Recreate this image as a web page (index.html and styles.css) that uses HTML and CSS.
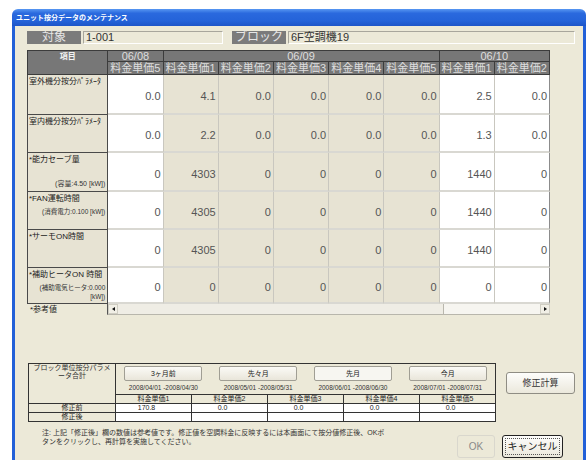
FILE: index.html
```html
<!DOCTYPE html>
<html lang="ja">
<head>
    <meta charset="UTF-8">
    <title>ユニット按分データのメンテナンス</title>
    <link rel="stylesheet" href="styles.css">
</head>
<body>
    <div class="window">
        <div class="titlebar">ユニット按分データのメンテナンス</div>
        <div class="client">
            <div class="target-row">
                <div class="tag">対象</div>
                <div class="field field-unit">1-001</div>
                <div class="tag tag-block">ブロック</div>
                <div class="field field-block">6F空調機19</div>
            </div>

            <table class="grid">
                <colgroup>
                    <col class="c-label">
                    <col class="c-w"><col class="c-b"><col class="c-b"><col class="c-b"><col class="c-b"><col class="c-b"><col class="c-w"><col class="c-w">
                </colgroup>
                <thead>
                    <tr class="h1">
                        <th rowspan="2" class="item">項目</th>
                        <th>06/08</th>
                        <th colspan="5">06/09</th>
                        <th colspan="2" class="last">06/10</th>
                    </tr>
                    <tr class="h2">
                        <th>料金単価5</th>
                        <th>料金単価1</th>
                        <th>料金単価2</th>
                        <th>料金単価3</th>
                        <th>料金単価4</th>
                        <th>料金単価5</th>
                        <th>料金単価1</th>
                        <th class="last">料金単価2</th>
                    </tr>
                </thead>
                <tbody>
                    <tr>
                        <td class="lbl"><div class="lbl-title">室外機分按分ﾊﾟﾗﾒｰﾀ</div></td>
                        <td>0.0</td><td>4.1</td><td>0.0</td><td>0.0</td><td>0.0</td><td>0.0</td><td>2.5</td><td class="last">0.0</td>
                    </tr>
                    <tr>
                        <td class="lbl"><div class="lbl-title">室内機分按分ﾊﾟﾗﾒｰﾀ</div></td>
                        <td>0.0</td><td>2.2</td><td>0.0</td><td>0.0</td><td>0.0</td><td>0.0</td><td>1.3</td><td class="last">0.0</td>
                    </tr>
                    <tr>
                        <td class="lbl">
                            <div class="lbl-title">*能力セーブ量</div>
                            <div class="lbl-sub sub-bottom">(容量:4.50 [kW])</div>
                        </td>
                        <td>0</td><td>4303</td><td>0</td><td>0</td><td>0</td><td>0</td><td>1440</td><td class="last">0</td>
                    </tr>
                    <tr>
                        <td class="lbl">
                            <div class="lbl-title">*FAN運転時間</div>
                            <div class="lbl-sub">(消費電力:0.100 [kW])</div>
                        </td>
                        <td>0</td><td>4305</td><td>0</td><td>0</td><td>0</td><td>0</td><td>1440</td><td class="last">0</td>
                    </tr>
                    <tr>
                        <td class="lbl"><div class="lbl-title">*サーモON時間</div></td>
                        <td>0</td><td>4305</td><td>0</td><td>0</td><td>0</td><td>0</td><td>1440</td><td class="last">0</td>
                    </tr>
                    <tr>
                        <td class="lbl">
                            <div class="lbl-title">*補助ヒータON 時間</div>
                            <div class="lbl-sub">(補助電気ヒータ:0.000<br>[kW])</div>
                        </td>
                        <td>0</td><td>0</td><td>0</td><td>0</td><td>0</td><td>0</td><td>0</td><td class="last">0</td>
                    </tr>
                </tbody>
            </table>
            <div class="grid-foot">
                <div class="ref">*参考値</div>
                <div class="hscroll">
                    <div class="arrow arrow-left"></div>
                    <div class="thumb"></div>
                    <div class="track"></div>
                    <div class="arrow arrow-right"></div>
                </div>
            </div>

            <div class="summary">
                <table class="sum">
                    <colgroup>
                        <col class="s-label"><col class="s-col"><col class="s-col"><col class="s-col"><col class="s-col"><col class="s-col">
                    </colgroup>
                    <tr class="s-top">
                        <td rowspan="2" class="s-head">ブロック単位按分パラメ<br>ータ合計</td>
                        <td colspan="5" class="months">
                            <div class="month-list">
                                <div class="month">
                                    <div class="mbtn">3ヶ月前</div>
                                    <div class="mdate">2008/04/01 -2008/04/30</div>
                                </div>
                                <div class="month">
                                    <div class="mbtn">先々月</div>
                                    <div class="mdate">2008/05/01 -2008/05/31</div>
                                </div>
                                <div class="month">
                                    <div class="mbtn mbtn-on">先月</div>
                                    <div class="mdate">2008/06/01 -2008/06/30</div>
                                </div>
                                <div class="month">
                                    <div class="mbtn">今月</div>
                                    <div class="mdate">2008/07/01 -2008/07/31</div>
                                </div>
                            </div>
                        </td>
                    </tr>
                    <tr class="s-cols">
                        <td>料金単価1</td><td>料金単価2</td><td>料金単価3</td><td>料金単価4</td><td>料金単価5</td>
                    </tr>
                    <tr class="s-val">
                        <td class="s-name">修正前</td>
                        <td>170.8</td><td>0.0</td><td>0.0</td><td>0.0</td><td>0.0</td>
                    </tr>
                    <tr class="s-val">
                        <td class="s-name">修正後</td>
                        <td></td><td></td><td></td><td></td><td></td>
                    </tr>
                </table>
                <div class="btn btn-calc">修正計算</div>
            </div>

            <div class="note-row">
                <p class="note">注: 上記「修正後」欄の数値は参考値です。修正値を空調料金に反映するには本画面にて按分値修正後、OKボ<br>タンをクリックし、再計算を実施してください。</p>
                <div class="actions">
                    <div class="btn btn-ok">OK</div>
                    <div class="btn btn-cancel"><span>キャンセル</span></div>
                </div>
            </div>
        </div>
    </div>
</body>
</html>
```

FILE: styles.css
```css
*{
    margin: 0;
    padding: 0;
    box-sizing: border-box;
}
body{
    background: #fff;
    font-family: "Liberation Sans", "Noto Sans CJK JP", sans-serif;
    color: #222;
    overflow: hidden;
}
.window{
    margin: 9px 0 0 12px;
    width: 574px;
}
.titlebar{
    height: 17px;
    padding-left: 4px;
    border-radius: 6px 6px 0 0;
    background: linear-gradient(#5797f2, #2a69de 25%, #2463d9 70%, #1d55c8);
    color: #fff;
    font-size: 7px;
    font-weight: bold;
    line-height: 17px;
}
.client{
    height: 434px;
    padding: 5px 8px 0 12px;
    background: #ece9d8;
    border-left: 3px solid #2260d8;
    border-right: 3px solid #2260d8;
}

/* 対象 / ブロック */
.target-row{
    display: flex;
    height: 13px;
}
.tag{
    width: 54px;
    background: #7b7b7b;
    color: #e6e6e6;
    font-size: 12px;
    line-height: 13px;
    text-align: center;
}
.tag-block{
    margin-left: 9px;
}
.field{
    margin-left: 2px;
    padding-left: 2px;
    border: 1px solid;
    border-color: #a8a69c #fff #fff #a8a69c;
    font-size: 11px;
    line-height: 11px;
    color: #333;
}
.field-unit{
    width: 140px;
}
.field-block{
    flex: 1;
}

/* main grid */
.grid{
    margin-top: 6px;
    width: 523px;
    table-layout: fixed;
    border-collapse: separate;
    border-spacing: 0;
}
.c-label{ width: 81px; }
.c-w{ width: 55px; background: #fff; }
.c-b{ width: 55px; background: #e7e3d3; }
.grid th{
    padding: 0;
    background: #777;
    color: #dedede;
    font-weight: normal;
    font-size: 11px;
    border-right: 1px solid #3c3c3c;
    border-bottom: 1px solid #3c3c3c;
    overflow: hidden;
    white-space: nowrap;
}
.grid .h1 th{
    border-top: 1px solid #3c3c3c;
    height: 12px;
    line-height: 10px;
}
.grid .h2 th{
    height: 13px;
    line-height: 12px;
}
.grid th.item{
    border-left: 1px solid #3c3c3c;
    vertical-align: top;
    font-size: 8px;
    font-weight: bold;
    color: #f2f2f2;
    line-height: 11px;
}
.grid td{
    padding: 4px 2px 0 0;
    border-right: 1px solid #c9c7bf;
    border-bottom: 2px solid #d9d8d2;
    text-align: right;
    font-size: 11px;
    color: #555;
}
.grid td.last{
    border-right: 1px solid #8c8c8c;
}
.grid tbody tr:nth-child(1){ height: 40px; }
.grid tbody tr:nth-child(2){ height: 38px; }
.grid tbody tr:nth-child(3){ height: 39px; }
.grid tbody tr:nth-child(4){ height: 38px; }
.grid tbody tr:nth-child(5){ height: 38px; }
.grid tbody tr:nth-child(6){ height: 36px; }
.grid td.lbl{
    padding: 2px 2px 0 1px;
    background: #e7e3d3;
    border-left: 1px solid #4a4a4a;
    border-right: 1px solid #4a4a4a;
    border-bottom: 1px solid #4a4a4a;
    vertical-align: top;
    text-align: left;
    color: #222;
    font-size: 8px;
    line-height: 10px;
    white-space: nowrap;
}
.lbl-sub{
    margin-top: 3px;
    text-align: right;
    color: #333;
    font-size: 6.5px;
    line-height: 9px;
}
.sub-bottom{
    margin-top: 14px;
    font-size: 7px;
}
.grid-foot{
    display: flex;
    width: 523px;
    height: 11px;
}
.ref{
    width: 80px;
    padding: 1px 0 0 3px;
    font-size: 8px;
    line-height: 10px;
}
.hscroll{
    flex: 1;
    display: flex;
    border-left: 1px solid #555;
    border-bottom: 1px solid #b8b6ac;
    background: #f6f5f0;
}
.arrow{
    width: 10px;
    position: relative;
    border: 1px solid #cfcdc2;
    background: #f1efe6;
}
.arrow-left::after,
.arrow-right::after{
    content: "";
    position: absolute;
    top: 2px;
    border: 2.5px solid transparent;
}
.arrow-left::after{
    left: 1px;
    border-right: 3px solid #111;
}
.arrow-right::after{
    left: 3px;
    border-left: 3px solid #111;
}
.thumb{
    width: 326px;
    background: #efede5;
    border-right: 1px solid #b9b7ad;
}
.track{
    flex: 1;
}

/* summary */
.summary{
    display: flex;
    align-items: flex-start;
    margin-top: 48px;
    padding-left: 1px;
}
.sum{
    width: 467px;
    table-layout: fixed;
    border-collapse: collapse;
    border: 1px solid #333;
    font-size: 7px;
    line-height: 8px;
    text-align: center;
}
.s-label{ width: 87px; }
.s-col{ width: 76px; }
.sum td{
    padding: 0;
    border: 1px solid #333;
}
.s-head{
    vertical-align: top;
    padding-top: 1px;
    font-size: 7px;
    color: #333;
}
.sum .months{
    height: 31px;
    border-bottom: 1px solid #333;
    vertical-align: top;
}
.month-list{
    display: flex;
}
.month{
    flex: 1;
    display: flex;
    flex-direction: column;
    align-items: center;
    padding-top: 2px;
}
.mbtn{
    width: 78px;
    height: 15px;
    border: 1px solid #a09e94;
    border-radius: 2px;
    background: linear-gradient(#fbfaf6, #e9e6da);
    font-size: 7px;
    line-height: 13px;
}
.mbtn-on{
    background: #f7f6f1;
}
.mdate{
    margin-top: 3px;
    font-size: 6.5px;
    line-height: 8px;
    white-space: nowrap;
    color: #333;
}
.s-cols td{
    height: 8px;
    background: #ece9d8;
}
.s-val td{
    height: 9px;
    background: #fff;
    padding-right: 14px;
}
.s-val td.s-name{
    background: #ece9d8;
    padding-right: 0;
}
.btn{
    border: 1px solid #8f8d84;
    border-radius: 3px;
    background: linear-gradient(#fdfdfb, #ebe8dc);
    text-align: center;
}
.btn-calc{
    margin: 9px 0 0 10px;
    width: 69px;
    height: 22px;
    font-size: 9px;
    line-height: 20px;
    color: #333;
}

/* note and buttons */
.note-row{
    display: flex;
    margin-top: 6px;
}
.note{
    padding-left: 15px;
    font-size: 7px;
    line-height: 9px;
    color: #333;
    white-space: nowrap;
}
.actions{
    display: flex;
    margin: 7px 12px 0 auto;
}
.btn-ok{
    width: 38px;
    height: 23px;
    border-color: #d9d7cd;
    background: #ece9d8;
    color: #8a8a8a;
    font-size: 10px;
    line-height: 21px;
}
.btn-cancel{
    margin-left: 7px;
    width: 61px;
    height: 23px;
    padding: 2px;
    border-color: #222;
    font-size: 10px;
    color: #222;
}
.btn-cancel span{
    display: block;
    height: 17px;
    line-height: 15px;
    border: 1px dotted #555;
}
```
